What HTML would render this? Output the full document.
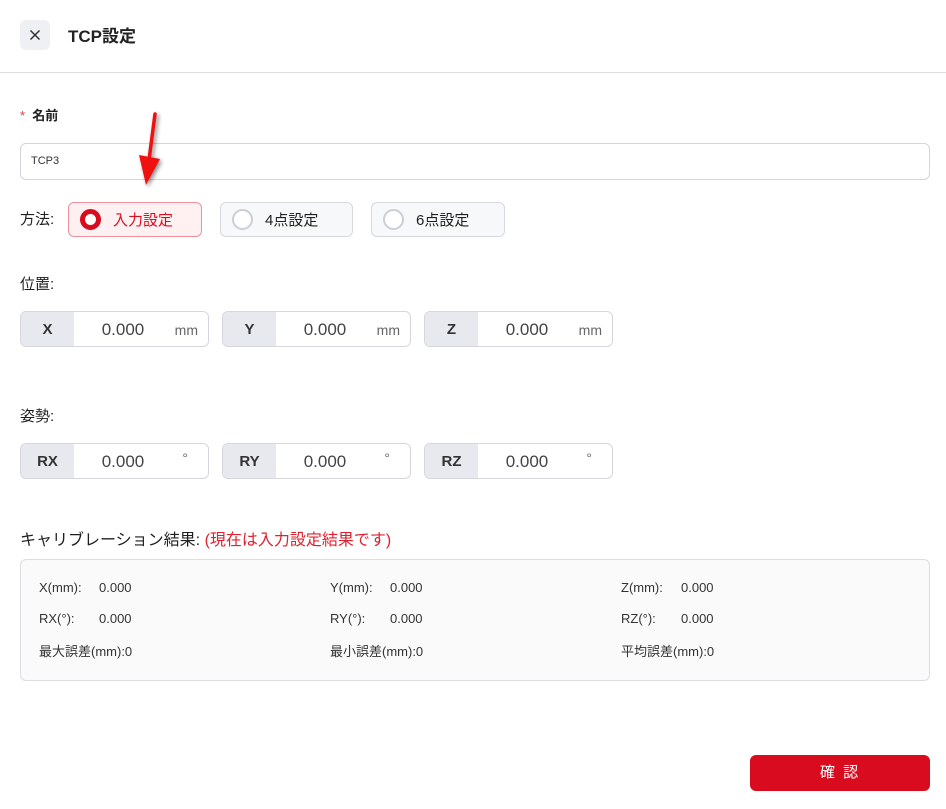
<!DOCTYPE html>
<html><head><meta charset="utf-8"><style>
*{margin:0;padding:0;box-sizing:border-box}
body{width:946px;height:809px;background:#fff;position:relative;overflow:hidden;font-family:"Liberation Sans","Noto Sans CJK JP",sans-serif;color:#1f1f1f}
.a{position:absolute}
.close{left:20px;top:20px;width:30px;height:30px;background:#eff0f4;border-radius:6px}
.rb{top:202px;height:35px;border-radius:6px;border:1px solid #d8d8e0;background:#f7f8fa;font-size:15px;line-height:35px}
.rb .c{position:absolute;left:11px;top:6px;width:21px;height:21px;border-radius:50%;border:2px solid #ccced6;background:#fff}
.rb span{position:absolute;left:44px;top:0}
.f{height:36px;width:189px;border:1px solid #d6d6de;border-radius:6px;overflow:hidden;background:#fff}
.f .l{position:absolute;left:0;top:0;width:53px;height:100%;background:#e8e9ef;text-align:center;line-height:36px;font-size:15px;font-weight:bold;color:#333}
.f .v{position:absolute;left:53px;width:98px;text-align:center;top:0;line-height:35px;font-size:17px;color:#444}
.f .u{position:absolute;right:10px;top:0;line-height:36px;font-size:14px;color:#666}
.t{font-size:13px;color:#333}
</style></head><body>
<div class="a close"><svg width="30" height="30"><path d="M10.5 10.5L19.5 19.5M19.5 10.5L10.5 19.5" stroke="#333" stroke-width="1.5"/></svg></div>
<div class="a" style="left:68px;top:22px;font-size:17px;font-weight:bold;color:#222">TCP設定</div>
<div class="a" style="left:0;top:72px;width:946px;height:1px;background:#dcdce4"></div>

<div class="a" style="left:20px;top:105px;font-size:13px;font-weight:bold"><span style="color:#e0353f;font-weight:normal">*</span>&nbsp; 名前</div>
<div class="a" style="left:20px;top:143px;width:910px;height:37px;border:1px solid #d4d4de;border-radius:6px;font-size:11px;line-height:35px;padding-left:10px;color:#333">TCP3</div>

<div class="a" style="left:20px;top:208px;font-size:15px">方法:</div>
<div class="a rb" style="left:68px;width:134px;background:#fff0f1;border-color:#f0909a"><div class="c" style="border:5px solid #d90b1f"></div><span style="color:#d90b1f">入力設定</span></div>
<div class="a rb" style="left:220px;width:133px"><div class="c"></div><span>4点設定</span></div>
<div class="a rb" style="left:371px;width:134px"><div class="c"></div><span>6点設定</span></div>

<div class="a" style="left:20px;top:273px;font-size:15px">位置:</div>
<div class="a f" style="left:20px;top:311px"><div class="l">X</div><div class="v">0.000</div><div class="u">mm</div></div>
<div class="a f" style="left:222px;top:311px"><div class="l">Y</div><div class="v">0.000</div><div class="u">mm</div></div>
<div class="a f" style="left:424px;top:311px"><div class="l">Z</div><div class="v">0.000</div><div class="u">mm</div></div>

<div class="a" style="left:20px;top:405px;font-size:15px">姿勢:</div>
<div class="a f" style="left:20px;top:443px"><div class="l">RX</div><div class="v">0.000</div><div class="u" style="right:20px;top:-4px">°</div></div>
<div class="a f" style="left:222px;top:443px"><div class="l">RY</div><div class="v">0.000</div><div class="u" style="right:20px;top:-4px">°</div></div>
<div class="a f" style="left:424px;top:443px"><div class="l">RZ</div><div class="v">0.000</div><div class="u" style="right:20px;top:-4px">°</div></div>

<div class="a" style="left:20px;top:526px;font-size:16px">キャリブレーション結果: <span style="color:#e0202e">(現在は入力設定結果です)</span></div>
<div class="a" style="left:20px;top:559px;width:910px;height:122px;border:1px solid #dcdce4;border-radius:6px;background:#fafafa"></div>
<div class="a t" style="left:39px;top:580px">X(mm):</div><div class="a t" style="left:99px;top:580px">0.000</div>
<div class="a t" style="left:330px;top:580px">Y(mm):</div><div class="a t" style="left:390px;top:580px">0.000</div>
<div class="a t" style="left:621px;top:580px">Z(mm):</div><div class="a t" style="left:681px;top:580px">0.000</div>
<div class="a t" style="left:39px;top:611px">RX(°):</div><div class="a t" style="left:99px;top:611px">0.000</div>
<div class="a t" style="left:330px;top:611px">RY(°):</div><div class="a t" style="left:390px;top:611px">0.000</div>
<div class="a t" style="left:621px;top:611px">RZ(°):</div><div class="a t" style="left:681px;top:611px">0.000</div>
<div class="a t" style="left:39px;top:641px">最大誤差(mm):0</div>
<div class="a t" style="left:330px;top:641px">最小誤差(mm):0</div>
<div class="a t" style="left:621px;top:641px">平均誤差(mm):0</div>

<div class="a" style="left:750px;top:755px;width:180px;height:36px;background:#d90b1f;border-radius:6px;color:#fff;font-size:15px;text-align:center;line-height:36px;letter-spacing:2px">確 認</div>

<svg class="a" style="left:130px;top:105px" width="50" height="90"><g style="filter:drop-shadow(2px 2px 2px rgba(0,0,0,.45))"><path d="M25 9L19 55" stroke="#f01010" stroke-width="3.5" stroke-linecap="round"/><path d="M9 50L30 54L16 80Z" fill="#f01010"/></g></svg>
</body></html>
